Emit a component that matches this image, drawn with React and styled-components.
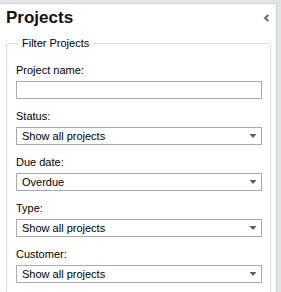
import React from "react";
import styled, { createGlobalStyle } from "styled-components";

const Global = createGlobalStyle`
  html, body { margin: 0; padding: 0; }
  body {
    background: #e4e4e4;
    font-family: "Liberation Sans", Arial, sans-serif;
    width: 281px;
    height: 292px;
    overflow: hidden;
  }
`;

const Panel = styled.div`
  margin-top: 3px;
  width: 277px;
  height: 289px;
  box-sizing: border-box;
  background: #ffffff;
  border-top: 1px solid #c8d6de;
  border-right: 1px solid #c8d6de;
  display: flex;
  flex-direction: column;
`;

const Header = styled.div`
  display: flex;
  align-items: center;
  justify-content: space-between;
  padding: 4px 6px 0 6px;
  height: 20px;
`;

const Title = styled.h1`
  margin: 0;
  font-size: 17px;
  line-height: 20px;
  font-weight: bold;
  color: #111;
`;

const Collapse = styled.button`
  border: 0;
  background: none;
  padding: 0;
  width: 7px;
  height: 8px;
  display: flex;
  margin-top: 0;
  cursor: pointer;
`;

const Group = styled.fieldset`
  margin: 9px 5px 0 6px;
  padding: 13px 8px 0 9px;
  border: 1px solid #dcdcdc;
  border-radius: 3px;
  flex: 1;
  min-width: 0;
`;

const Legend = styled.legend`
  font-size: 11px;
  line-height: 13px;
  color: #000;
  padding: 0 3px 0 2px;
  margin-left: 4px;
`;

const Field = styled.div`
  display: flex;
  flex-direction: column;
  margin-bottom: 10px;
`;

const Label = styled.label`
  font-size: 11px;
  line-height: 14px;
  color: #000;
  margin-bottom: 4px;
`;

const TextBox = styled.input`
  box-sizing: border-box;
  height: 18px;
  width: 100%;
  border: 1px solid #ababab;
  margin: 0;
  padding: 0 4px;
  font: 11px "Liberation Sans", Arial, sans-serif;
  background: #fff;
  outline: none;
`;

const Combo = styled.div`
  box-sizing: border-box;
  height: 18px;
  border: 1px solid #ababab;
  background: #fff;
  display: flex;
  align-items: center;
  justify-content: space-between;
  padding: 0 4px 0 5px;
  font-size: 11px;
  line-height: 16px;
  color: #000;
`;

const Arrow = styled.svg`
  width: 8px;
  height: 4px;
  flex: none;
`;

function Select({ value }) {
  return (
    <Combo role="combobox">
      <span>{value}</span>
      <Arrow viewBox="0 0 8 4">
        <path d="M0.5 0 H7.5 L4 4 Z" fill="#5f5f5f" />
      </Arrow>
    </Combo>
  );
}

export default function App() {
  return (
    <>
      <Global />
      <Panel>
        <Header>
          <Title>Projects</Title>
          <Collapse aria-label="Collapse">
            <svg width="7" height="8" viewBox="0 0 7 8">
              <polyline points="5.5,1 2,4 5.5,7" fill="none" stroke="#6a6a6a" strokeWidth="2" />
            </svg>
          </Collapse>
        </Header>
        <Group>
          <Legend>Filter Projects</Legend>
          <Field>
            <Label>Project name:</Label>
            <TextBox type="text" />
          </Field>
          <Field>
            <Label>Status:</Label>
            <Select value="Show all projects" />
          </Field>
          <Field>
            <Label>Due date:</Label>
            <Select value="Overdue" />
          </Field>
          <Field>
            <Label>Type:</Label>
            <Select value="Show all projects" />
          </Field>
          <Field>
            <Label>Customer:</Label>
            <Select value="Show all projects" />
          </Field>
        </Group>
      </Panel>
    </>
  );
}
